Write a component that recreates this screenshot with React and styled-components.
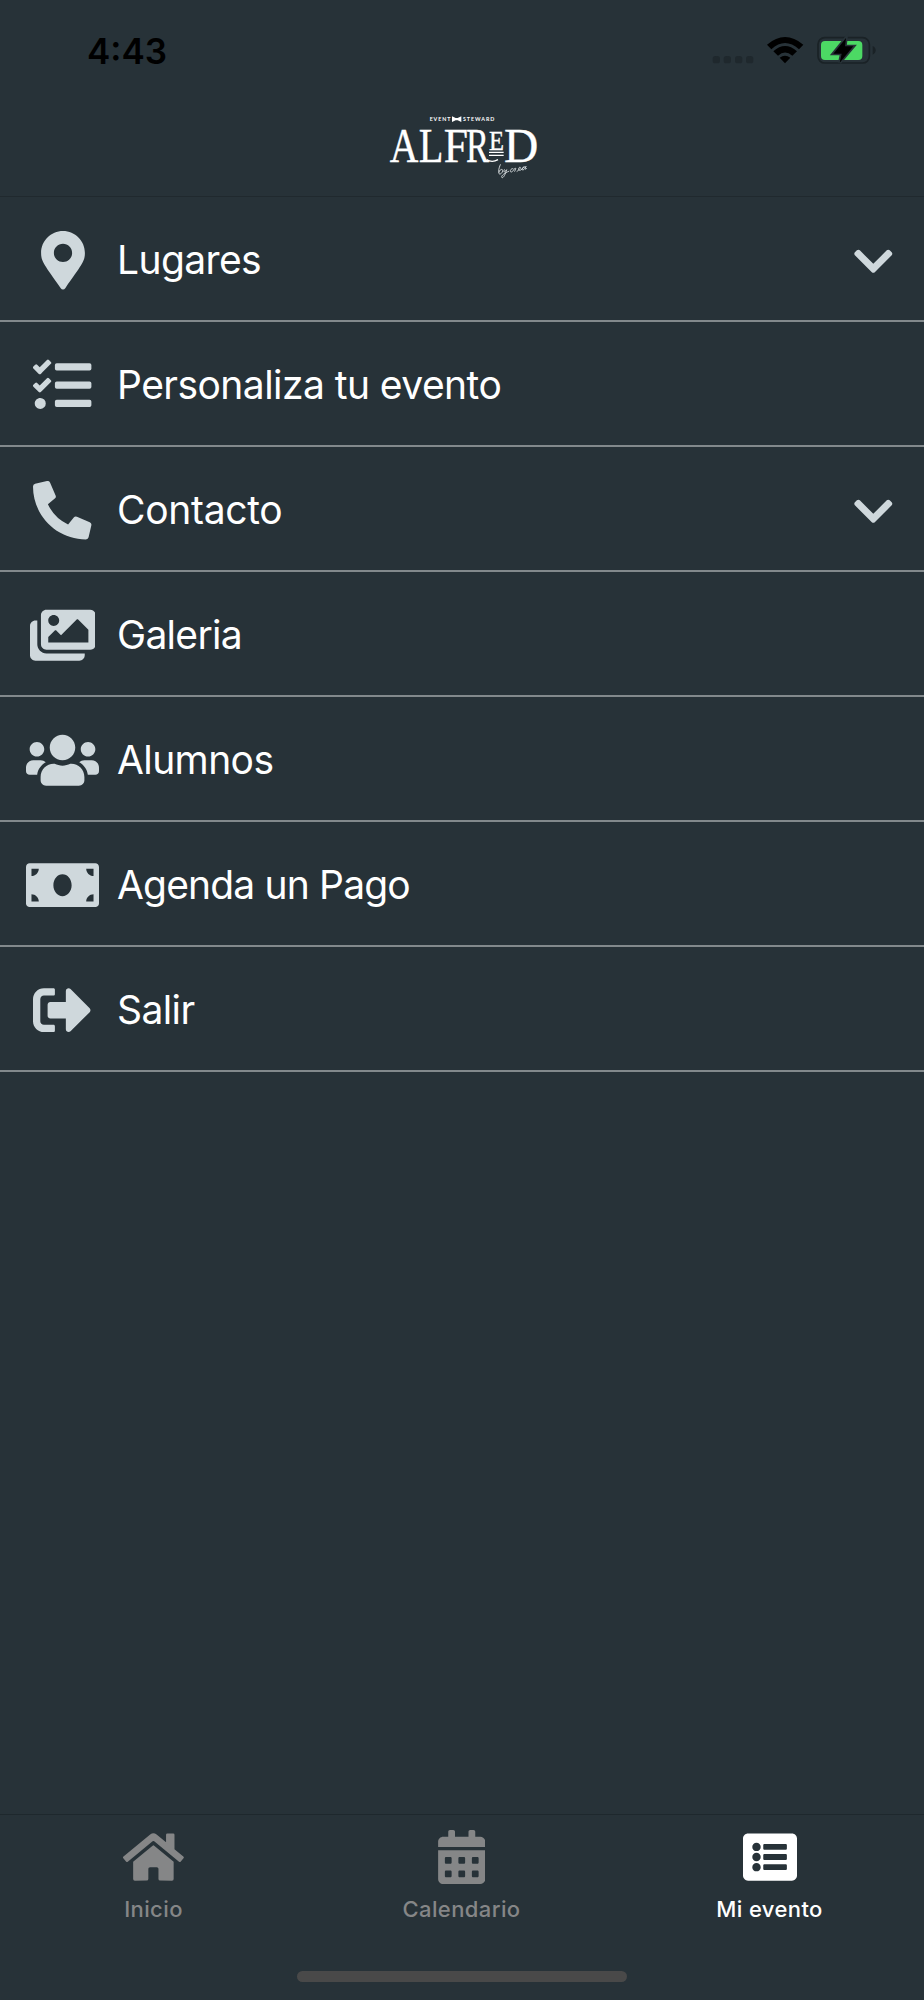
import React, { useState } from "react";
import styled, { createGlobalStyle } from "styled-components";
import {
  FaMapMarkerAlt,
  FaTasks,
  FaPhoneAlt,
  FaImages,
  FaUsers,
  FaMoneyBill,
  FaSignOutAlt,
  FaChevronDown,
  FaHome,
  FaCalendarAlt,
  FaListAlt,
} from "react-icons/fa";

const menuItems = [
  { label: "Lugares", icon: FaMapMarkerAlt, iconWidth: 44, tracking: -0.6, expandable: true },
  { label: "Personaliza tu evento", icon: FaTasks, iconWidth: 58.4, tracking: -0.55 },
  { label: "Contacto", icon: FaPhoneAlt, iconWidth: 58.4, tracking: -0.3, expandable: true },
  { label: "Galeria", icon: FaImages, iconWidth: 65.7, tracking: -0.7 },
  { label: "Alumnos", icon: FaUsers, iconWidth: 73, tracking: -0.6 },
  { label: "Agenda un Pago", icon: FaMoneyBill, iconWidth: 73, tracking: -0.83 },
  { label: "Salir", icon: FaSignOutAlt, iconWidth: 58.4, tracking: -0.6 },
];

const tabs = [
  { label: "Inicio", icon: FaHome, iconWidth: 60.8 },
  { label: "Calendario", icon: FaCalendarAlt, iconWidth: 47.5 },
  { label: "Mi evento", icon: FaListAlt, iconWidth: 54 },
];

function StatusIcons() {
  return (
    <StatusSvg viewBox="0 0 660 210">
      <g fill="#1f282d">
        <rect x="68" y="108" width="22" height="22" rx="8" />
        <rect x="101" y="108" width="22" height="22" rx="8" />
        <rect x="135" y="108" width="22" height="22" rx="8" />
        <rect x="168" y="108" width="22" height="22" rx="8" />
      </g>
      <path d="M231 74 Q285 28 340 74 L327 88 Q285 50 244 88 Z" />
      <path d="M250 94 Q285 62 321 94 L307 107 Q285 88 264 107 Z" />
      <path d="M269 113 Q285 101 301 113 L285 130 Z" />
      <rect x="384" y="53" width="154" height="76" rx="20" fill="none" stroke="#1a2226" strokeWidth="5" />
      <path d="M548 78 Q557 82 557 91 Q557 100 548 104 Z" fill="#1a2226" />
      <rect x="393" y="63" width="124" height="57" rx="12" fill="#4cd964" />
      <path
        d="M468 54 L430 101 L455 101 L449 128 L490 79 L465 79 Z"
        stroke="#273238"
        strokeWidth="10"
      />
      <path d="M468 54 L430 101 L455 101 L449 128 L490 79 L465 79 Z" />
    </StatusSvg>
  );
}

function Logo() {
  return (
    <LogoSvg viewBox="-9 0 570 288">
      <LogoTag x="179" y="63" textLength="62">EVENT</LogoTag>
      <path d="M246 49 L257 54 L263 54 L274 49 L274 66 L263 61 L257 61 L246 66 Z" fill="#fff" />
      <LogoTag x="279" y="63" textLength="94">STEWARD</LogoTag>
      <LogoLetter x="59" y="185" textLength="86">A</LogoLetter>
      <LogoLetter x="146" y="185" textLength="74">L</LogoLetter>
      <LogoLetter x="221" y="185" textLength="73">F</LogoLetter>
      <LogoLetter x="288" y="185" textLength="69">R</LogoLetter>
      <path d="M350 179 Q366 189 384 179" fill="none" stroke="#fff" strokeWidth="4" />
      <LogoLetter x="357" y="149" textLength="45" $small>E</LogoLetter>
      <path d="M357 157 H401 M357 166 H401" stroke="#fff" strokeWidth="4" />
      <LogoLetter x="402" y="185" textLength="103">D</LogoLetter>
      <g fill="none" stroke="#dfe3e5" strokeWidth="2.6" strokeLinecap="round">
        <path d="M391 194 C386 205 385 213 387 221 C391 225 401 216 397 209 C393 206 388 212 387 216" />
        <path d="M403 209 C399 217 403 219 410 209 C406 222 401 234 396 233 C391 229 403 219 416 214" />
        <path d="M429 206 C423 203 417 216 424 216 C429 215 432 207 436 204 C439 204 436 210 434 214" />
        <path d="M441 214 C446 211 453 205 451 202 C446 200 443 211 449 211 C454 211 458 205 462 201" />
        <path d="M465 201 C456 198 453 211 459 210 C463 209 467 202 468 199 C464 207 465 211 470 205" />
      </g>
    </LogoSvg>
  );
}

function App() {
  const [activeTab, setActiveTab] = useState("Mi evento");
  return (
    <Screen>
      <GlobalStyle />
      <StatusBar>
        <Clock>4:43</Clock>
        <StatusIcons />
      </StatusBar>
      <Header>
        <Logo />
      </Header>
      <Menu>
        {menuItems.map((item) => (
          <MenuRow key={item.label}>
            <IconBox $iconWidth={item.iconWidth}>
              <item.icon />
            </IconBox>
            <MenuLabel $tracking={item.tracking}>{item.label}</MenuLabel>
            {item.expandable && <Chevron />}
          </MenuRow>
        ))}
      </Menu>
      <TabBar>
        {tabs.map((tab) => (
          <Tab
            key={tab.label}
            $active={tab.label === activeTab}
            $iconWidth={tab.iconWidth}
            onClick={() => setActiveTab(tab.label)}
          >
            <tab.icon />
            <TabLabel>{tab.label}</TabLabel>
          </Tab>
        ))}
      </TabBar>
      <HomeArea>
        <HomeIndicator />
      </HomeArea>
    </Screen>
  );
}

export default App;

const GlobalStyle = createGlobalStyle`
  * {
    box-sizing: border-box;
  }
  body {
    margin: 0;
    background: #273238;
  }
`;

const Screen = styled.div`
  display: flex;
  flex-direction: column;
  width: 924px;
  height: 2000px;
  background: #273238;
  color: #fff;
  font-family: Inter, "Liberation Sans", sans-serif;
  overflow: hidden;
`;

const StatusBar = styled.div`
  display: flex;
  justify-content: space-between;
  height: 100px;
  padding: 20px 14px 0 87px;
`;

const Clock = styled.div`
  color: #000;
  font-size: 35px;
  font-weight: 600;
  line-height: 62px;
`;

const StatusSvg = styled.svg`
  width: 220px;
  height: 70px;
`;

const Header = styled.header`
  display: flex;
  justify-content: center;
  height: 97px;
  border-bottom: 1px solid #20292e;
`;

const LogoSvg = styled.svg`
  width: 190px;
  height: 96px;
`;

const LogoTag = styled.text`
  fill: #fff;
  font-family: Lato, sans-serif;
  font-size: 16px;
  font-weight: 700;
`;

const LogoLetter = styled.text.attrs({ lengthAdjust: "spacingAndGlyphs" })`
  fill: #fff;
  stroke: #fff;
  stroke-width: 1px;
  font-family: "Liberation Serif", serif;
  font-size: ${(props) => (props.$small ? "80px" : "143px")};
`;

const Menu = styled.nav`
  flex: 1;
`;

const MenuRow = styled.div`
  display: flex;
  align-items: center;
  height: 125px;
  padding: 2px 28px 0 25px;
  border-bottom: 2px solid #82898c;
`;

const IconBox = styled.div`
  display: flex;
  justify-content: center;
  width: 75px;
  padding-top: 2px;
  color: #cfd8dc;
  font-size: 58.4px;
  svg {
    width: ${(props) => props.$iconWidth}px;
  }
`;

const MenuLabel = styled.span`
  flex: 1;
  margin-left: 17px;
  font-size: 39px;
  letter-spacing: ${(props) => props.$tracking}px;
`;

const Chevron = styled(FaChevronDown)`
  margin-top: 3px;
  color: #cfd8dc;
  font-size: 44.6px;
`;

const TabBar = styled.nav`
  display: grid;
  grid-template-columns: repeat(3, 1fr);
  height: 157px;
  border-top: 1px solid #1e282d;
`;

const Tab = styled.div`
  display: flex;
  flex-direction: column;
  align-items: center;
  padding: 15px 1px 0 0;
  color: ${(props) => (props.$active ? "#fff" : "#858687")};
  font-size: 54px;
  cursor: pointer;
  svg {
    width: ${(props) => props.$iconWidth}px;
  }
`;

const TabLabel = styled.span`
  margin-top: 10px;
  font-size: 22px;
  font-weight: 500;
  line-height: 30px;
  letter-spacing: 0.4px;
`;

const HomeArea = styled.div`
  display: flex;
  justify-content: center;
  height: 29px;
`;

const HomeIndicator = styled.div`
  width: 330px;
  height: 11px;
  border-radius: 6px;
  background: #494949;
`;
